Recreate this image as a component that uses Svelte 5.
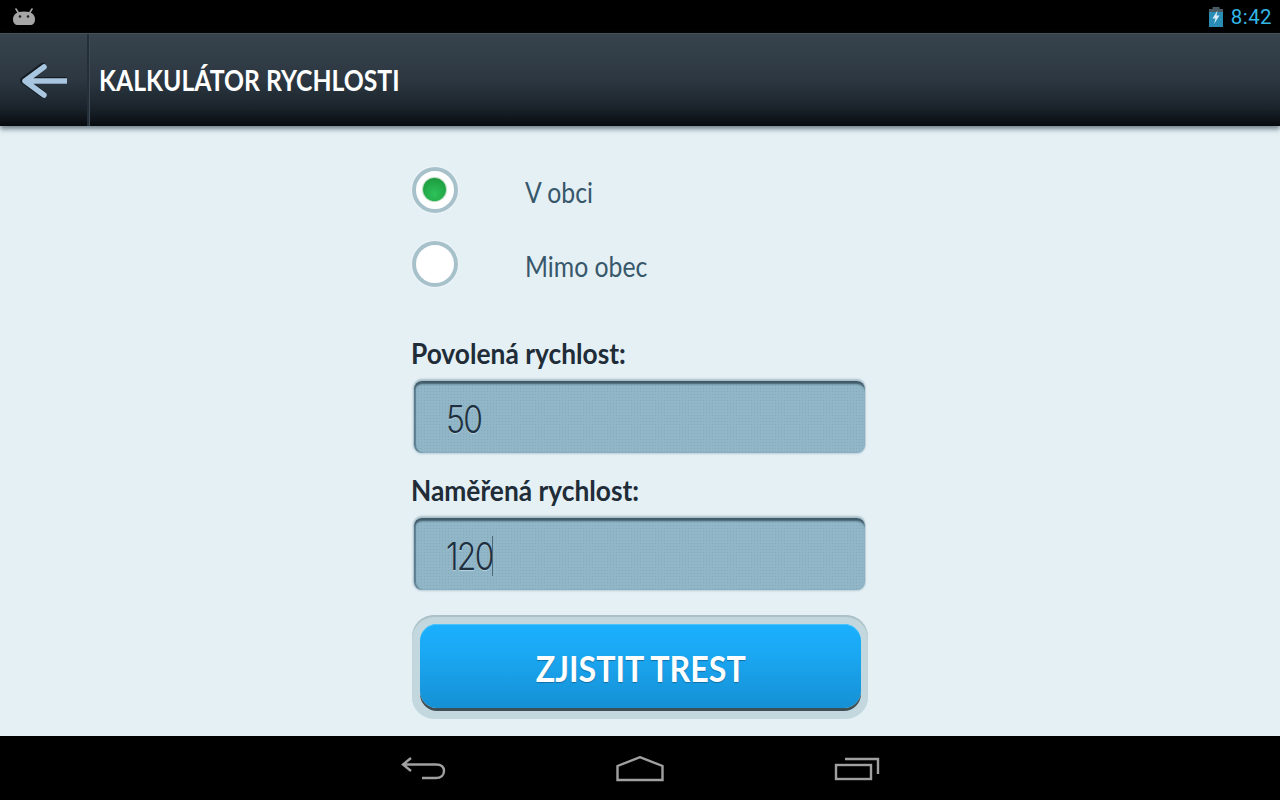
<script>
  let zone = $state('obec');
  let allowed = $state('50');
  let measured = $state('120');
</script>

<div class="screen">
  <div class="status">
    <svg class="bug" width="24" height="18" viewBox="0 0 24 18" aria-hidden="true">
      <path d="M4 1 L6.5 5 M20 1 L17.5 5" stroke="#a6a6a6" stroke-width="1.6" stroke-linecap="round"/>
      <path d="M1 11.5 C1 7 4 3.5 12 3.5 C20 3.5 23 7 23 11.5 C23 15 21 17 18 17 H6 C3 17 1 15 1 11.5 Z" fill="#a6a6a6"/>
      <circle cx="8" cy="8.5" r="1.3" fill="#222"/>
      <circle cx="16" cy="8.5" r="1.3" fill="#222"/>
    </svg>
    <div class="status-right">
      <svg width="16" height="20" viewBox="0 0 16 20" aria-hidden="true">
        <rect x="4.5" y="0" width="7" height="2" fill="#4a5a62"/>
        <rect x="1" y="2" width="14" height="4" fill="#4a5a62"/>
        <rect x="1" y="5" width="14" height="15" fill="#2a8db6"/>
        <path d="M9.5 3.5 L4.5 11.5 H7.5 L6 17 L11.5 8.5 H8.5 Z" fill="#dcecf4"/>
      </svg>
      <span class="time">8:42</span>
    </div>
  </div>

  <header class="bar">
    <button class="back" aria-label="Zpět">
      <svg width="50" height="38" viewBox="0 0 50 38" aria-hidden="true">
        <path d="M27 6 L8 20 L27 34 M8 20 H49" fill="none" stroke="#141b21" stroke-width="7" stroke-linecap="round" stroke-linejoin="round" transform="translate(-1.2 -0.6)"/>
        <path d="M27 6 L8 20 L27 34 M8 20 H49" fill="none" stroke="#a9c6e0" stroke-width="5.5" stroke-linecap="round" stroke-linejoin="round"/>
      </svg>
    </button>
    <h1><span>KALKULÁTOR RYCHLOSTI</span></h1>
  </header>

  <main class="content">
    <form class="form" onsubmit={(e) => e.preventDefault()}>
      <label class="radio">
        <input type="radio" name="zone" value="obec" bind:group={zone} />
        <span class="ring">{#if zone === 'obec'}<span class="dot"></span>{/if}</span>
        <span class="radio-text">V obci</span>
      </label>
      <label class="radio second">
        <input type="radio" name="zone" value="mimo" bind:group={zone} />
        <span class="ring">{#if zone === 'mimo'}<span class="dot"></span>{/if}</span>
        <span class="radio-text">Mimo obec</span>
      </label>

      <label class="field first">
        <span class="field-label">Povolená rychlost:</span>
        <span class="input-wrap"><input class="num" bind:value={allowed} /></span>
      </label>
      <label class="field">
        <span class="field-label">Naměřená rychlost:</span>
        <span class="input-wrap"><input class="num" bind:value={measured} /><span class="caret"></span></span>
      </label>

      <div class="cta-frame">
        <button class="cta" type="submit"><span>ZJISTIT TREST</span></button>
      </div>
    </form>
  </main>

  <nav class="nav">
    <svg width="46" height="26" viewBox="0 0 46 26" aria-hidden="true">
      <path d="M11 2 L3 8.5 L11 15 M3 8.5 H36 C41 8.5 44 11 44 15 C44 19 41 22 36 22 H22" fill="none" stroke="#a0a0a0" stroke-width="2.4"/>
    </svg>
    <svg width="48" height="26" viewBox="0 0 48 26" aria-hidden="true">
      <path d="M1.5 10 L24 1.2 L46.5 10 V24 H1.5 Z" fill="none" stroke="#a0a0a0" stroke-width="2.4"/>
    </svg>
    <svg width="46" height="24" viewBox="0 0 46 24" aria-hidden="true">
      <rect x="2" y="8" width="35" height="14" fill="none" stroke="#a0a0a0" stroke-width="2.4"/>
      <path d="M11 2 H44 V17" fill="none" stroke="#a0a0a0" stroke-width="2.4"/>
    </svg>
  </nav>
</div>

<style>
  :global(body) { margin: 0; background: #000; }
  .screen {
    width: 1280px; height: 800px; overflow: hidden;
    display: flex; flex-direction: column;
    font-family: "Lato", "Noto Sans", sans-serif;
    background: #e5f0f5;
  }
  .status {
    height: 33px; flex: none; background: #000;
    display: flex; align-items: center; justify-content: space-between;
    padding: 0 8px 0 12px; box-sizing: border-box;
  }
  .status-right { display: flex; align-items: center; gap: 7px; }
  .time { font-family: Roboto, sans-serif; font-size: 20.5px; color: #33b5e5; letter-spacing: 0.4px; }
  .bar {
    height: 93px; flex: none; display: flex; align-items: stretch;
    background: linear-gradient(#37434d 0%, #2c3741 50%, #1b242c 80%, #070b0f 100%);
    border-top: 1px solid #45525c; box-sizing: border-box;
    box-shadow: 0 3px 5px rgba(60, 80, 90, .7);
    position: relative;
  }
  .back {
    width: 89px; padding: 0; border: 0; background: none;
    border-right: 2px solid #232e38; box-shadow: 1px 0 0 #3c4852;
    display: flex; align-items: center; justify-content: center; box-sizing: border-box;
    flex: none;
  }
  .back svg { margin-left: -3px; }
  h1 {
    margin: 0 0 2px 10px; align-self: center;
    font-size: 29px; font-weight: 700; color: #fff;
  }
  h1 span { display: inline-block; transform: scaleX(.854); transform-origin: left; white-space: nowrap; }
  .content { flex: 1; display: flex; justify-content: center; min-height: 0; }
  .form { width: 456px; display: flex; flex-direction: column; padding-top: 41px; box-sizing: border-box; }
  .radio { display: flex; align-items: center; height: 47px; position: relative; cursor: pointer; }
  .radio input { position: absolute; opacity: 0; width: 0; height: 0; }
  .radio.second { margin-top: 27px; }
  .ring {
    width: 46px; height: 46px; box-sizing: border-box; border-radius: 50%;
    border: 4px solid #a7c1cb; background: #fff; flex: none; align-self: flex-start;
    display: flex; align-items: center; justify-content: center;
    box-shadow: 0 0 2px #fff;
  }
  .dot {
    width: 23px; height: 23px; border-radius: 50%; margin-top: -2px; margin-left: -1px;
    background: radial-gradient(circle at 50% 70%, #2ec25a, #1fa142 70%, #17833a);
    box-shadow: 0 0 1px 1px #b7d8bb;
  }
  .radio-text {
    margin-left: 67px; font-size: 28px; color: #37576a; margin-top: 2px;
    display: inline-block; transform: scaleX(.885); transform-origin: left; white-space: nowrap;
  }
  .field { display: flex; flex-direction: column; margin-top: 20px; }
  .field.first { margin-top: 48px; }
  .field-label {
    font-size: 28px; font-weight: 700; color: #202c37; line-height: 34px; margin-left: -1px;
    display: inline-block; transform: scaleX(.94); transform-origin: left; white-space: nowrap;
  }
  .input-wrap {
    margin-top: 11px; height: 72px; box-sizing: border-box; position: relative; width: 451px; margin-left: 2px;
    display: flex; align-items: center; overflow: visible;
    border-radius: 8px;
    background-color: #90b6c8;
    background-image: radial-gradient(#83a9bb 0.8px, transparent 1px);
    background-size: 3px 3px;
    box-shadow: inset 0 4px 2px -1px #3f5967, inset 2px 0 1px #5f7f90, 0 -2px 2px #a9bfc9, 0 1px 2px #bfd3dc, -1px 0 2px #a9bfc9, 1px 0 1px #cfdfe6;
  }
  .num {
    box-sizing: border-box; height: 100%; border: 0; outline: 0; background: none;
    padding: 3px 0 0 38px;
    font-family: "Inter", sans-serif; font-weight: 300; font-size: 38px; letter-spacing: -2px; color: #1e3040;
    text-shadow: 0 1px 0 #b5d2de;
    transform: scaleX(.84); transform-origin: 0 50%;
    width: 119%;
  }
  .caret { position: absolute; left: 78px; top: 18px; width: 1px; height: 40px; background: #4d6a7a; }
  .cta-frame {
    margin-top: 25px; height: 104px; box-sizing: border-box; padding: 9px 7px 11px 8px;
    border-radius: 22px; background: #c2d8de;
    box-shadow: inset 0 2px 1px #aabfc6;
  }
  .cta {
    width: 100%; height: 100%; border: 0; border-radius: 17px; cursor: pointer;
    background: linear-gradient(#1ab0ff 0%, #1ba8f3 35%, #1590d4 100%);
    box-shadow: 0 3px 0 #3f4f56, inset 0 1px 0 #4bc4ff;
    font-family: "Lato", sans-serif; font-size: 37px; font-weight: 700; color: #fff;
    text-shadow: 0 1px 1px #0f6fa6;
    padding: 3px 0 0 0;
  }
  .cta span { display: inline-block; transform: scaleX(.87); transform-origin: center; white-space: nowrap; }
  .nav {
    height: 64px; flex: none; background: #000;
    display: flex; align-items: center; justify-content: center; gap: 170px;
    padding-top: 2px; box-sizing: border-box;
  }
</style>
